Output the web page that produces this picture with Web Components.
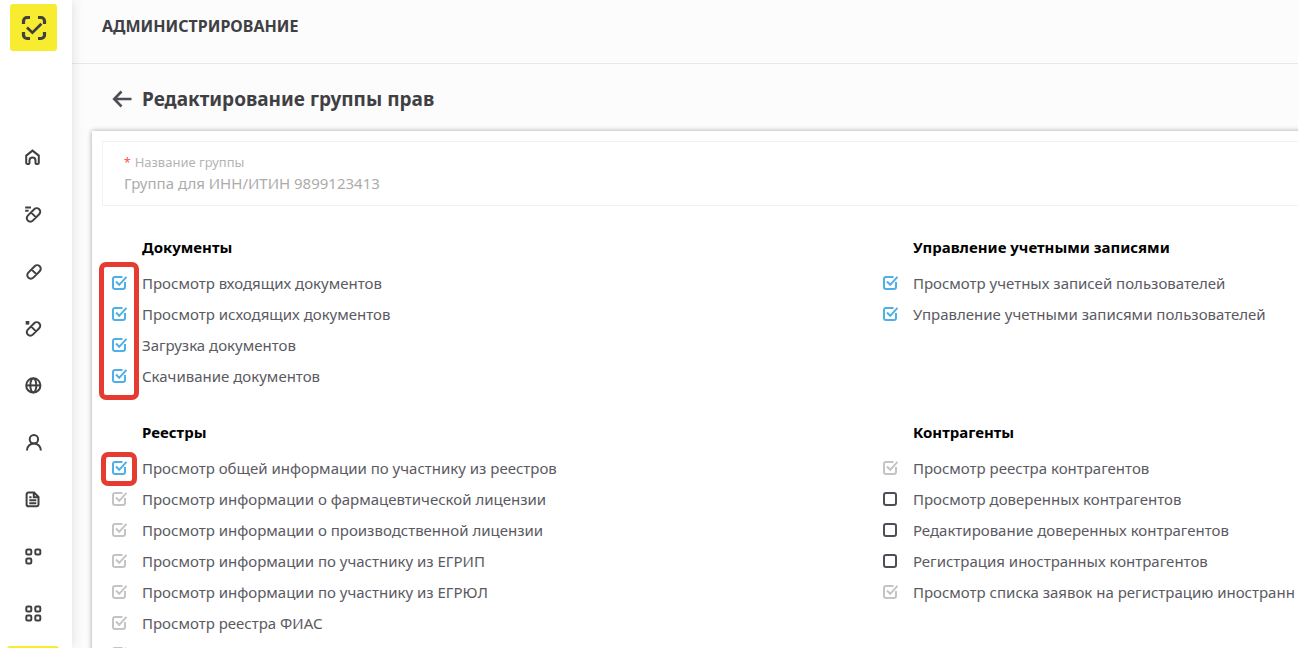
<!DOCTYPE html>
<html lang="ru">
<head>
<meta charset="utf-8">
<title>Администрирование</title>
<style>
  html, body { margin: 0; height: 100%; }
  body { background: #fcfcfc; color: #5a5a62; font: 15px/21px "Noto Sans", "Open Sans", sans-serif; overflow: hidden; }
</style>
</head>
<body>
<app-shell>
  <side-nav slot="nav"></side-nav>
  <page-header slot="header">АДМИНИСТРИРОВАНИЕ</page-header>
  <page-title>Редактирование группы прав</page-title>
  <form-card>
    <text-field slot="field" label="Название группы" value="Группа для ИНН/ИТИН 9899123413"></text-field>
    <right-group heading="Документы">
      <mark-frame>
        <right-option state="on">Просмотр входящих документов</right-option>
        <right-option state="on">Просмотр исходящих документов</right-option>
        <right-option state="on">Загрузка документов</right-option>
        <right-option state="on">Скачивание документов</right-option>
      </mark-frame>
    </right-group>
    <right-group heading="Управление учетными записями">
      <right-option state="on">Просмотр учетных записей пользователей</right-option>
      <right-option state="on">Управление учетными записями пользователей</right-option>
    </right-group>
    <right-group heading="Реестры">
      <mark-frame compact>
        <right-option state="on">Просмотр общей информации по участнику из реестров</right-option>
      </mark-frame>
      <right-option state="locked">Просмотр информации о фармацевтической лицензии</right-option>
      <right-option state="locked">Просмотр информации о производственной лицензии</right-option>
      <right-option state="locked">Просмотр информации по участнику из ЕГРИП</right-option>
      <right-option state="locked">Просмотр информации по участнику из ЕГРЮЛ</right-option>
      <right-option state="locked">Просмотр реестра ФИАС</right-option>
      <right-option state="locked"></right-option>
    </right-group>
    <right-group heading="Контрагенты">
      <right-option state="locked">Просмотр реестра контрагентов</right-option>
      <right-option state="off">Просмотр доверенных контрагентов</right-option>
      <right-option state="off">Редактирование доверенных контрагентов</right-option>
      <right-option state="off">Регистрация иностранных контрагентов</right-option>
      <right-option state="locked">Просмотр списка заявок на регистрацию иностранн</right-option>
    </right-group>
  </form-card>
</app-shell>

<script>
const define = (name, render) => customElements.define(name, class extends HTMLElement {
  connectedCallback() {
    if (this.shadowRoot) return;
    this.attachShadow({ mode: "open" }).innerHTML = render(this);
  }
});

define("app-shell", () => `
  <style>
    :host { display: grid; grid-template-columns: 72px minmax(0, 1fr); height: 100vh; overflow: hidden; }
    .page { display: flex; flex-direction: column; overflow: hidden; }
    main { padding-left: 20px; }
  </style>
  <slot name="nav"></slot>
  <div class="page"><slot name="header"></slot><main><slot></slot></main></div>`);

const pill = `<path d="M2.6 9.2 9 2.8a3.5 3.5 0 0 1 5 5L7.6 14.2a3.5 3.5 0 0 1-5-5ZM5.8 6l5 5"/>`;
const icons = {
  "Главная": `<path d="M2.2 6.6 8.5 1.6l6.3 5v7.2a1.2 1.2 0 0 1-1.2 1.2h-1.1a1 1 0 0 1-1-1v-2.6a3 3 0 0 0-6 0V14a1 1 0 0 1-1 1H3.4a1.2 1.2 0 0 1-1.2-1.2Z"/>`,
  "Списки препаратов": `<g transform="translate(1.2 .4)">${pill}</g><path d="M1.2 1.6H7M1.2 4.8h3.4"/>`,
  "Препараты": `<g transform="translate(1.7 .4)">${pill}</g>`,
  "Препараты: прочее": `<g transform="translate(1.2 .4)">${pill}</g><path d="M1.7 2.8h3.6" stroke-width="3.6"/>`,
  "Сайт": `<circle cx="9.3" cy="8.4" r="7.1"/><ellipse cx="9.3" cy="8.4" rx="3" ry="7"/><path d="M2.3 8.4h14"/>`,
  "Пользователи": `<circle cx="9.9" cy="5.2" r="4.2"/><path d="M2.9 16.5a7 7 0 0 1 14 0"/>`,
  "Документы": `<path d="M4.6 1.5h5.5l4.4 4.3v7.6a1.8 1.8 0 0 1-1.8 1.8H4.4a1.8 1.8 0 0 1-1.8-1.8V3.3a1.8 1.8 0 0 1 2-1.8ZM9.8 1.5v4.8h4.7M5.3 6.3h2.2M5.3 9.3h7M5.3 12.3h7"/>`,
  "Модули": `<rect x="2.3" y="1.5" width="5" height="5" rx="1.2"/><rect x="11.3" y="1.5" width="5" height="5" rx="1.2"/><rect x="2.3" y="10.5" width="5" height="5" rx="1.2"/>`,
  "Все модули": `<rect x="2.3" y="1.5" width="5" height="5" rx="1.2"/><rect x="11.3" y="1.5" width="5" height="5" rx="1.2"/><rect x="2.3" y="10.5" width="5" height="5" rx="1.2"/><rect x="11.3" y="10.5" width="5" height="5" rx="1.2"/>`
};

define("side-nav", () => `
  <style>
    :host { display: flex; flex-direction: column; box-sizing: border-box; padding: 4px 6px 0 7px; min-height: 0; background: #fff; box-shadow: 0 0 12px rgba(0,0,0,.13); z-index: 1; }
    a { display: block; flex: none; }
    svg { display: block; fill: none; stroke: #404040; stroke-width: 2; }
    .logo { width: 47px; height: 47px; margin: 0 3px 81px; border-radius: 3px; background: #f8ec31; }
    nav { display: flex; flex-direction: column; gap: 5px; }
    nav a { width: 52px; height: 52px; display: grid; place-items: center; border-radius: 3px; }
    nav .current { margin-top: 1px; background: #f8ec31; }
  </style>
  <a class="logo" href="#" aria-label="На главную"><svg viewBox="0 0 47 47"><path stroke-width="3.2" d="M13.5 20v-3a3.5 3.5 0 0 1 3.5-3.5h3M28 13.5h3a3.5 3.5 0 0 1 3.5 3.5v3M34.5 28v3a3.5 3.5 0 0 1-3.5 3.5h-3M20 34.5h-3a3.5 3.5 0 0 1-3.5-3.5v-3"/><path stroke-width="2.7" d="m17 23.5 5.4 5.2 9-9"/></svg></a>
  <nav>${Object.entries(icons).map(([name, art]) => `<a href="#" aria-label="${name}"><svg width="18" height="18" viewBox="0 0 18 18">${art}</svg></a>`).join("")}
    <a class="current" href="#" aria-label="Администрирование" aria-current="page"></a></nav>`);

define("page-header", () => `
  <style>
    :host { display: block; border-bottom: 1px solid #e8e8e8; color: #404044; }
    h1 { margin: 0; padding: 16px 30px 26px; font-size: 16px; line-height: 21px; font-weight: 700; }
  </style>
  <h1><slot></slot></h1>`);

define("page-title", () => `
  <style>
    :host { display: flex; align-items: center; gap: 10px; padding: 21px 20px 18px; color: #404044; }
    button { display: block; margin: 0; padding: 0; border: 0; background: none; color: #4e4e56; }
    svg { display: block; fill: none; stroke: currentColor; stroke-width: 2.6; }
    h2 { margin: 0; font-size: 19px; line-height: 28px; font-weight: 700; }
  </style>
  <button type="button" aria-label="Назад"><svg width="20" height="18" viewBox="0 0 20 18"><path d="M19.5 9H2.5M9.5 1.5 2.2 9l7.3 7.5"/></svg></button>
  <h2><slot></slot></h2>`);

define("form-card", () => `
  <style>
    :host { display: block; box-sizing: border-box; width: 130%; padding: 10px 16px 40px 10px; background: #fff; box-shadow: 0 0 5px rgba(0,0,0,.35); }
    .groups { display: grid; grid-template-columns: 1fr 1fr; row-gap: 35px; padding-top: 31px; }
  </style>
  <form><slot name="field"></slot><div class="groups"><slot></slot></div></form>`);

define("text-field", el => `
  <style>
    :host { display: block; border: 1px solid #f2f2f2; padding: 10px 21px 11px; color: #b4b4b4; }
    label { display: block; font-size: 13px; line-height: 20px; }
    .req { color: #ff4d4f; font-size: 12px; margin-right: 4px; }
    input { display: block; box-sizing: border-box; width: 100%; height: 21px; margin: 0; padding: 0; border: 0; background: none; color: #acacac; font: inherit; }
  </style>
  <label for="name"><span class="req">*</span>${el.getAttribute("label")}</label>
  <input id="name" value="${el.getAttribute("value")}" disabled>`);

define("right-group", el => `
  <style>
    :host { display: block; min-width: 0; }
    h3 { margin: 0 0 15px 40px; font-size: 15px; line-height: 21px; font-weight: 700; color: #000; }
    .list { display: flex; flex-direction: column; gap: 10px; }
  </style>
  <h3>${el.getAttribute("heading")}</h3>
  <div class="list"><slot></slot></div>`);

define("mark-frame", () => `
  <style>
    :host { display: flex; flex-direction: column; gap: 10px; position: relative; }
    .frame { position: absolute; box-sizing: border-box; left: -3px; width: 40px; top: -11px; bottom: -13px; border: 5px solid #e53b30; border-radius: 7px; pointer-events: none; }
    :host([compact]) .frame { left: -1px; width: 36px; top: -6px; bottom: -7px; }
  </style>
  <slot></slot><div class="frame"></div>`);

const box = {
  on: `<path d="M10.5 1H3a2 2 0 0 0-2 2v8a2 2 0 0 0 2 2h8a2 2 0 0 0 2-2V6M4 5.5 7.2 8.8l7.3-8"/>`,
  off: `<rect x="1" y="1" width="12" height="12" rx="2"/>`
};
define("right-option", el => {
  const state = el.getAttribute("state");
  const off = state === "off";
  return `
  <style>
    :host { display: block; --tick: #4e4e56; }
    :host([state="on"]) { --tick: #4fb0e6; }
    :host([state="locked"]) { --tick: #c4c4c4; }
    label { display: grid; grid-template-columns: 15px 1fr; column-gap: 15px; align-items: center; padding-left: 10px; min-height: 21px; white-space: nowrap; }
    input, svg { grid-area: 1 / 1; width: 15px; height: 15px; margin: 0; }
    input { appearance: none; }
    svg { fill: none; stroke: var(--tick); stroke-width: 2; pointer-events: none; }
  </style>
  <label><input type="checkbox" ${off ? "" : "checked"} ${state === "locked" ? "disabled" : ""}>
    <svg viewBox="0 0 15 15" aria-hidden="true">${off ? box.off : box.on}</svg><span><slot></slot></span></label>`;
});
</script>
</body>
</html>
